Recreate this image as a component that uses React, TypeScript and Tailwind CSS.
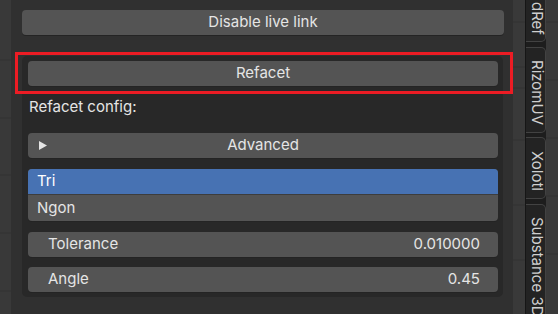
import React from "react";

const font = { fontFamily: "Inter, 'DejaVu Sans', sans-serif" };

const Viewport: React.FC<{ w: string; lines: number[] }> = ({ w, lines }) => (
  <div className={`${w} h-full bg-[#393939] shrink-0`}>
    <svg width="100%" height="100%">
      {lines.map((y) => (
        <line key={y} x1="0" x2="100%" y1={y} y2={y} stroke="#333333" strokeWidth="1" />
      ))}
    </svg>
  </div>
);

const Button: React.FC<{ label: string; className?: string }> = ({ label, className }) => (
  <div
    className={`h-[25px] rounded-[4px] bg-[#545454] shadow-[0_1px_0_#242424] flex items-center justify-center text-[15px] text-[#e5e5e5] ${className ?? ""}`}
  >
    {label}
  </div>
);

const NumberField: React.FC<{ label: string; value: string; className?: string }> = ({ label, value, className }) => (
  <div
    className={`h-[25px] rounded-[4px] bg-[#545454] shadow-[0_1px_0_#242424] flex items-center justify-between pl-[20px] pr-[18px] text-[15px] text-[#e5e5e5] ${className ?? ""}`}
  >
    <span>{label}</span>
    <span>{value}</span>
  </div>
);

const tabs = [
  { label: "dRef", h: "h-[52px]", mt: "-mt-[10px]" },
  { label: "RizomUV", h: "h-[86px]", mt: "mt-[5px]" },
  { label: "Xolotl", h: "h-[62px]", mt: "mt-[4px]" },
  { label: "Substance 3D", h: "h-[120px]", mt: "mt-[5px]" },
];

export default function App() {
  return (
    <div className="w-[558px] h-[314px] flex overflow-hidden bg-[#393939]" style={font}>
      <Viewport w="w-[11px]" lines={[60, 118, 175, 233, 291]} />

      {/* sidebar */}
      <div className="relative w-[502px] h-full bg-[#303030] shrink-0">
        <Button label="Disable live link" className="mt-[10px] ml-[11px] w-[482px] h-[24px]" />

        <div className="mt-[21px] ml-[11px] w-[481px] rounded-[5px] bg-[#282828] pt-[5px] pb-[5px] pl-[6px] pr-[5px]">
          <Button label="Refacet" />
          <div className="h-[47px] pt-[11px] leading-[20px] text-[15px] text-[#e5e5e5] pl-[1px]">Refacet config:</div>
          <div className="h-[25px] rounded-[4px] bg-[#545454] shadow-[0_1px_0_#242424] flex items-center text-[15px] text-[#e5e5e5]">
            <svg width="8" height="9" viewBox="0 0 8 9" className="ml-[11px]">
              <polygon points="0,0 8,4.5 0,9" fill="#e5e5e5" />
            </svg>
            <span className="flex-1 text-center -ml-[19px]">Advanced</span>
          </div>
          <div className="mt-[11px] rounded-[4px] overflow-hidden bg-[#545454] shadow-[0_1px_0_#242424] text-[15px] text-[#e5e5e5]">
            <div className="h-[25px] bg-[#4772b3] flex items-center pl-[9px] text-white">Tri</div>
            <div className="h-[1px] bg-[#3d3d3d]" />
            <div className="h-[26px] flex items-center pl-[9px]">Ngon</div>
          </div>
          <NumberField label="Tolerance" value="0.010000" className="mt-[11px]" />
          <NumberField label="Angle" value="0.45" className="mt-[10px]" />
        </div>

        {/* highlight annotation */}
        <div className="absolute left-[4px] top-[52px] w-[498px] h-[42px] border-[3px] border-[#ec1c24]" />
      </div>

      <Viewport w="w-[12px]" lines={[22, 67, 88, 140, 205, 260]} />

      {/* tab column */}
      <div className="w-[21px] h-full bg-[#1d1d1d] shrink-0 flex flex-col border-l border-[#161616]">
        {tabs.map((t) => (
          <div
            key={t.label}
            className={`${t.h} ${t.mt} shrink-0 w-[20px] bg-[#232323] border border-l-0 border-[#424242] rounded-r-[5px] flex items-start justify-center pt-[5px] text-[15px] text-[#cfcfcf] leading-none [writing-mode:vertical-rl] overflow-hidden`}
          >
            {t.label}
          </div>
        ))}
      </div>

      <Viewport w="w-[12px]" lines={[22, 80, 138, 196, 254]} />
    </div>
  );
}
